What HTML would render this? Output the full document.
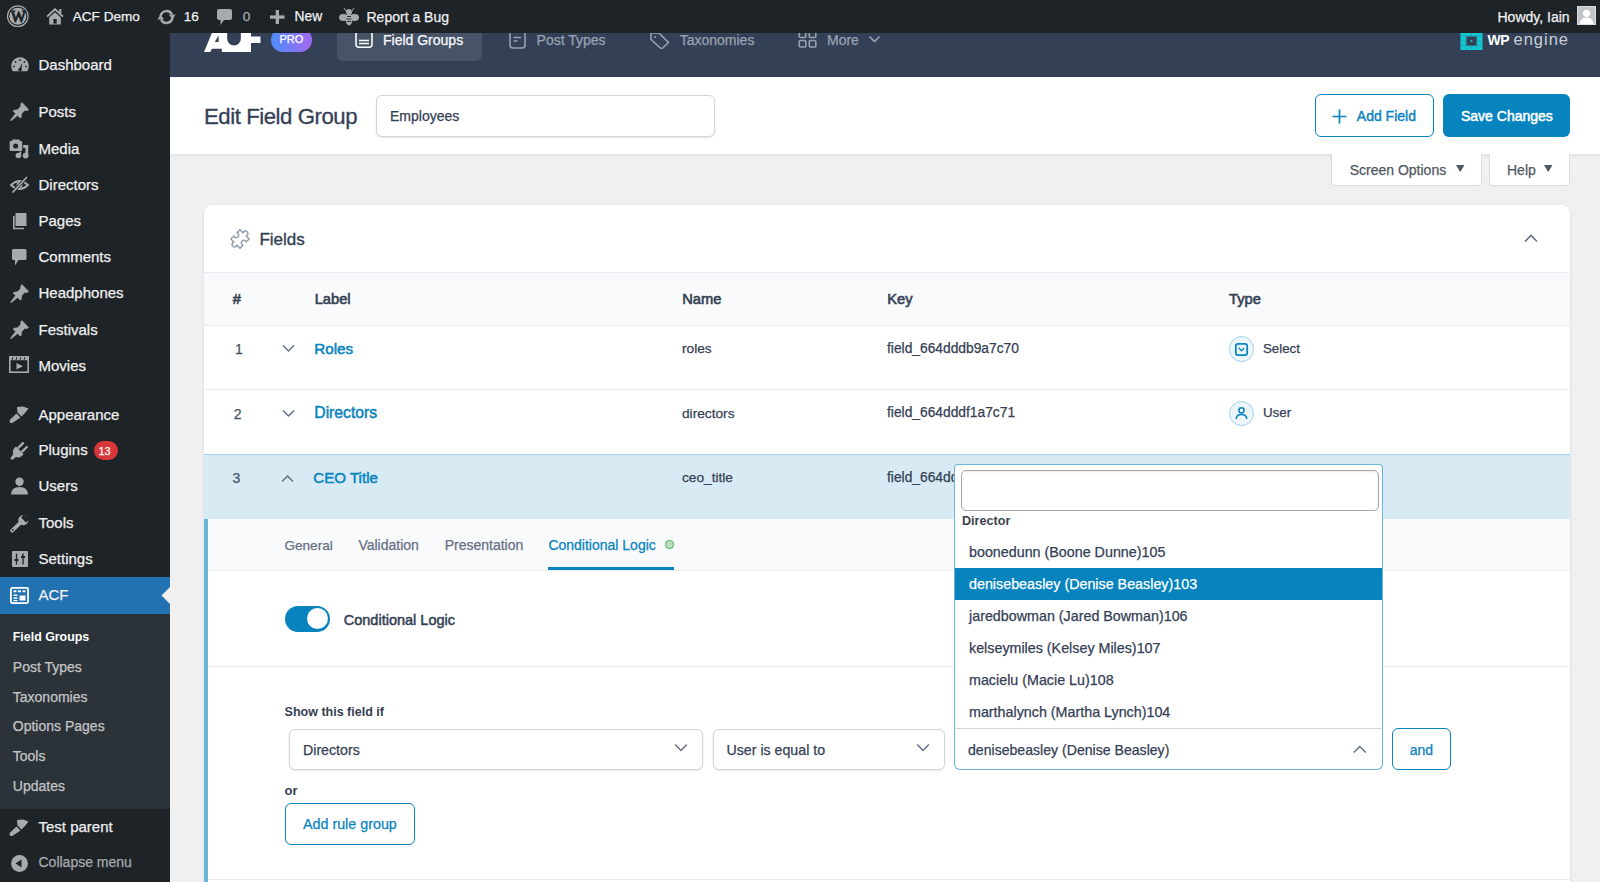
<!DOCTYPE html>
<html><head><meta charset="utf-8"><title>Edit Field Group</title>
<style>
html,body{margin:0;padding:0}
body{width:1600px;height:882px;overflow:hidden;position:relative;background:#f0f0f1;font-family:"Liberation Sans",sans-serif}
.t{position:absolute;line-height:1;white-space:nowrap;-webkit-text-stroke:0.25px currentColor}
.r{position:absolute;display:block}
</style></head><body>
<div class="r" style="left:170px;top:33px;width:1430px;height:44px;background:#344055;"></div>
<svg class="r" style="left:204px;top:32px;" width="57" height="20" viewBox="0 0 57 20"><path d="M0 20 L8.3 0 L47 0 L47 20 Z" fill="#fff"/><rect x="46" y="4.5" width="10.5" height="6.5" fill="#fff"/><path d="M10.8 10 L14.6 3.5 L14.6 10 Z" fill="#344055"/><path d="M6.4 20 L7.8 16.7 L17.8 16.7 L17.8 20 Z" fill="#344055"/><circle cx="30" cy="6.7" r="6.8" fill="#344055"/><rect x="23.2" y="0" width="13.6" height="6" fill="#344055"/></svg>
<div class="r" style="left:270.5px;top:27.5px;width:41.5px;height:24.5px;border-radius:12.5px;background:linear-gradient(90deg,#4d8cfb,#a36af3)"></div>
<div class="t " style="left:279.5px;top:34.09px;font-size:11px;color:#fff;font-weight:400;">PRO</div>
<div class="r" style="left:337px;top:20px;width:145px;height:40.6px;border-radius:6px;background:#475467"></div>
<svg class="r" style="left:355px;top:30px;" width="18" height="19" viewBox="0 0 18 19"><rect x="1" y="1" width="16" height="16.2" rx="3" fill="none" stroke="#f9fafb" stroke-width="1.6"/><path d="M4 10.4 H14 M4 13.6 H14" stroke="#f9fafb" stroke-width="1.5"/></svg>
<div class="t " style="left:383px;top:33.05px;font-size:14px;color:#f9fafb;font-weight:400;">Field Groups</div>
<svg class="r" style="left:509px;top:30px;clip-path:inset(2px 0 0 0)" width="17" height="19" viewBox="0 0 17 19"><rect x="1" y="1" width="15" height="17" rx="3" fill="none" stroke="#98a2b3" stroke-width="1.6"/><path d="M4.5 7.5 H12 M4.5 11 H8.5" stroke="#98a2b3" stroke-width="1.6"/></svg>
<div class="t " style="left:536.6px;top:33.05px;font-size:14px;color:#98a2b3;font-weight:400;">Post Types</div>
<svg class="r" style="left:649px;top:30px;clip-path:inset(2px 0 0 0)" width="21" height="19" viewBox="0 0 21 19"><path d="M2 3 L10 3 L19.5 12.5 L12.5 19 L2 9.5 Z" fill="none" stroke="#98a2b3" stroke-width="1.6" stroke-linejoin="round"/><circle cx="6" cy="7" r="1" fill="#98a2b3"/></svg>
<div class="t " style="left:679.7px;top:33.05px;font-size:14px;color:#98a2b3;font-weight:400;">Taxonomies</div>
<svg class="r" style="left:798px;top:30px;clip-path:inset(1px 0 0 0)" width="20" height="18" viewBox="0 0 20 18"><rect x="1.3" y="1" width="6.5" height="6.5" rx="1" fill="none" stroke="#98a2b3" stroke-width="1.6"/><rect x="11.3" y="1" width="6.5" height="6.5" rx="1" fill="none" stroke="#98a2b3" stroke-width="1.6"/><rect x="1.3" y="10.5" width="6.5" height="6.5" rx="1" fill="none" stroke="#98a2b3" stroke-width="1.6"/><rect x="11.3" y="10.5" width="6.5" height="6.5" rx="1" fill="none" stroke="#98a2b3" stroke-width="1.6"/></svg>
<div class="t " style="left:827px;top:33.05px;font-size:14px;color:#98a2b3;font-weight:400;">More</div>
<svg class="r" style="left:868px;top:35px;" width="13" height="9" viewBox="0 0 13 9"><path d="M1.5 1.5 L6.5 6.5 L11.5 1.5" fill="none" stroke="#98a2b3" stroke-width="1.6"/></svg>
<svg class="r" style="left:1460px;top:32px;" width="23" height="18" viewBox="0 0 23 18"><rect x="0.5" y="0" width="22" height="18" fill="#0ecad4"/><path d="M6 0 V18 M11.5 0 V18 M17 0 V18 M0 4 H23 M0 9 H23 M0 13.5 H23" stroke="#2f9aa5" stroke-width="0.7"/><rect x="6.5" y="4.5" width="10" height="9" fill="#344055"/><circle cx="11.5" cy="9" r="1" fill="#0ecad4"/></svg>
<div class="t " style="left:1487.5px;top:32.65px;font-size:14px;color:#fff;font-weight:700;-webkit-text-stroke:0;letter-spacing:-0.5px">WP</div>
<div class="t " style="left:1513.5px;top:30.53px;font-size:16.5px;color:#c9ced6;font-weight:400;-webkit-text-stroke:0px currentColor;letter-spacing:1px">engine</div>
<div class="r" style="left:170px;top:77px;width:1430px;height:78px;background:#fff;border-bottom:1px solid #e4e7ec;box-sizing:border-box;box-shadow:0 1px 2px rgba(16,24,40,.08)"></div>
<div class="t " style="left:204px;top:105.71px;font-size:22.2px;color:#344054;font-weight:400;-webkit-text-stroke:0.3px currentColor;letter-spacing:-0.45px">Edit Field Group</div>
<div class="r" style="left:376px;top:94.5px;width:339px;height:42px;background:#fff;border:1px solid #d0d5dd;border-radius:6px;box-sizing:border-box;box-shadow:0 1px 2px rgba(16,24,40,.1)"></div>
<div class="t " style="left:390px;top:109.15px;font-size:14px;color:#344054;font-weight:400;">Employees</div>
<div class="r" style="left:1315px;top:94px;width:119px;height:43px;background:#fff;border:1px solid #0783be;border-radius:6px;box-sizing:border-box"></div>
<svg class="r" style="left:1331px;top:108px;" width="17" height="17" viewBox="0 0 17 17"><path d="M8.5 1.5 V15.5 M1.5 8.5 H15.5" stroke="#0783be" stroke-width="1.7"/></svg>
<div class="t " style="left:1356.8px;top:109.15px;font-size:14px;color:#0783be;font-weight:400;-webkit-text-stroke:0.4px currentColor;">Add Field</div>
<div class="r" style="left:1443px;top:94px;width:127px;height:43px;background:#0783be;border-radius:6px"></div>
<div class="t " style="left:1461px;top:109.15px;font-size:14px;color:#fff;font-weight:400;-webkit-text-stroke:0.5px currentColor;">Save Changes</div>
<div class="r" style="left:1331px;top:154px;width:151px;height:32px;background:#fff;border:1px solid #dcdcde;border-top:none;border-radius:0 0 4px 4px;box-sizing:border-box"></div>
<div class="r" style="left:1489px;top:154px;width:81px;height:32px;background:#fff;border:1px solid #dcdcde;border-top:none;border-radius:0 0 4px 4px;box-sizing:border-box"></div>
<div class="t " style="left:1349.7px;top:162.75px;font-size:14px;color:#50575e;font-weight:400;">Screen Options</div>
<svg class="r" style="left:1456px;top:165px;" width="9" height="8" viewBox="0 0 9 8"><path d="M0 0 H8.5 L4.25 7 Z" fill="#50575e"/></svg>
<div class="t " style="left:1507px;top:162.75px;font-size:14px;color:#50575e;font-weight:400;">Help</div>
<svg class="r" style="left:1543.5px;top:165px;" width="9" height="8" viewBox="0 0 9 8"><path d="M0 0 H8.5 L4.25 7 Z" fill="#50575e"/></svg>
<div class="r" style="left:0px;top:0px;width:1600px;height:33px;background:#1d2327;"></div>
<div class="t " style="left:72.7px;top:10.09px;font-size:13.6px;color:#f0f0f1;font-weight:400;">ACF Demo</div>
<div class="t " style="left:183.7px;top:10.09px;font-size:13.6px;color:#f0f0f1;font-weight:400;">16</div>
<div class="t " style="left:242.7px;top:10.09px;font-size:13.6px;color:#a7aaad;font-weight:400;">0</div>
<div class="t " style="left:294.5px;top:9.92px;font-size:13.8px;color:#f0f0f1;font-weight:400;">New</div>
<div class="t " style="left:366.5px;top:9.75px;font-size:14px;color:#f0f0f1;font-weight:400;">Report a Bug</div>
<div class="t " style="left:1497.5px;top:9.75px;font-size:14px;color:#f0f0f1;font-weight:400;">Howdy, Iain</div>
<svg class="r" style="left:6px;top:5px;" width="23" height="23" viewBox="0 0 23 23"><circle cx="11.8" cy="11.2" r="10.3" fill="none" stroke="#a7aaad" stroke-width="1.2"/><circle cx="11.8" cy="11.2" r="8.5" fill="#a7aaad"/><text x="11.8" y="16.9" text-anchor="middle" font-family="Liberation Serif" font-size="16" fill="#1d2327" letter-spacing="-1.2" stroke="#1d2327" stroke-width="1">W</text></svg>
<svg class="r" style="left:46px;top:8px;" width="18" height="17" viewBox="0 0 18 17"><path d="M1 8.6 L9 1.2 L17 8.6" fill="none" stroke="#a7aaad" stroke-width="1.9"/><path d="M3.2 9.6 L9 4.3 L14.8 9.6 V16.5 H3.2 Z" fill="#a7aaad"/><rect x="7.4" y="11" width="3.3" height="4.6" fill="#1d2327"/><rect x="13.2" y="1" width="2.2" height="4.5" fill="#a7aaad"/></svg>
<svg class="r" style="left:157px;top:8px;" width="19" height="18" viewBox="0 0 19 18"><path d="M3.6 8.2 A6 6 0 0 1 15 6.6" fill="none" stroke="#a7aaad" stroke-width="2.5"/><path d="M15.4 9.8 A6 6 0 0 1 4 11.4" fill="none" stroke="#a7aaad" stroke-width="2.5"/><path d="M11.8 6.8 L18.6 6.4 L15.6 11.2 Z" fill="#a7aaad"/><path d="M7.2 11.2 L0.4 11.6 L3.4 6.8 Z" fill="#a7aaad"/></svg>
<svg class="r" style="left:217px;top:9px;" width="15" height="17" viewBox="0 0 15 17"><path d="M2 0 H13 Q15 0 15 2 V9 Q15 11 13 11 H7 L3.5 16 L3.5 11 H2 Q0 11 0 9 V2 Q0 0 2 0 Z" fill="#a7aaad"/></svg>
<svg class="r" style="left:270px;top:10px;" width="15" height="14" viewBox="0 0 15 14"><rect x="5.7" y="0" width="3.3" height="14" fill="#a7aaad"/><rect x="0" y="5.4" width="14.5" height="3.3" fill="#a7aaad"/></svg>
<svg class="r" style="left:339px;top:8px;" width="20" height="18" viewBox="0 0 20 18"><ellipse cx="4.5" cy="9.5" rx="4.5" ry="3.4" fill="#a7aaad"/><ellipse cx="15.5" cy="9.5" rx="4.5" ry="3.4" fill="#a7aaad"/><ellipse cx="10" cy="11.5" rx="3.3" ry="6" fill="#a7aaad"/><circle cx="10" cy="4" r="3" fill="#a7aaad"/><path d="M8 8.5h4M7.5 11h5M7.8 13.5h4.4" stroke="#1d2327" stroke-width="0.9"/><path d="M7 3 L5 0 M13 3 L15 0" stroke="#a7aaad" stroke-width="1"/></svg>
<div class="r" style="left:1577px;top:6px;width:19px;height:19px;background:#c3c4c7;border:1px solid #dcdcde;box-sizing:border-box;overflow:hidden"><svg width="17" height="17" viewBox="0 0 17 17" style="position:absolute;left:0;top:0"><circle cx="8.5" cy="6.3" r="3.6" fill="#fff"/><path d="M1.5 17 Q2 10.5 8.5 10.5 Q15 10.5 15.5 17 Z" fill="#fff"/></svg></div>
<div class="r" style="left:0px;top:32px;width:170px;height:850px;background:#1d2327;"></div>
<div class="r" style="left:0px;top:614px;width:170px;height:195px;background:#2c3338;"></div>
<div class="r" style="left:0px;top:577px;width:170px;height:37px;background:#2271b1;"></div>
<svg class="r" style="left:161px;top:587px;" width="9" height="17" viewBox="0 0 9 17"><path d="M9 0 L0.5 8.5 L9 17 Z" fill="#f0f0f1"/></svg>
<div class="t " style="left:38.5px;top:56.70px;font-size:15px;color:#f0f0f1;font-weight:400;">Dashboard</div>
<div class="t " style="left:38.5px;top:103.50px;font-size:15px;color:#f0f0f1;font-weight:400;">Posts</div>
<div class="t " style="left:38.5px;top:140.65px;font-size:15px;color:#f0f0f1;font-weight:400;">Media</div>
<div class="t " style="left:38.5px;top:177.10px;font-size:15px;color:#f0f0f1;font-weight:400;">Directors</div>
<div class="t " style="left:38.5px;top:213.35px;font-size:15px;color:#f0f0f1;font-weight:400;">Pages</div>
<div class="t " style="left:38.5px;top:249.20px;font-size:15px;color:#f0f0f1;font-weight:400;">Comments</div>
<div class="t " style="left:38.5px;top:285.15px;font-size:15px;color:#f0f0f1;font-weight:400;">Headphones</div>
<div class="t " style="left:38.5px;top:321.60px;font-size:15px;color:#f0f0f1;font-weight:400;">Festivals</div>
<div class="t " style="left:38.5px;top:358.10px;font-size:15px;color:#f0f0f1;font-weight:400;">Movies</div>
<div class="t " style="left:38.5px;top:406.80px;font-size:15px;color:#f0f0f1;font-weight:400;">Appearance</div>
<div class="t " style="left:38.5px;top:442.25px;font-size:15px;color:#f0f0f1;font-weight:400;">Plugins</div>
<div class="t " style="left:38.5px;top:477.80px;font-size:15px;color:#f0f0f1;font-weight:400;">Users</div>
<div class="t " style="left:38.5px;top:515.15px;font-size:15px;color:#f0f0f1;font-weight:400;">Tools</div>
<div class="t " style="left:38.5px;top:551.40px;font-size:15px;color:#f0f0f1;font-weight:400;">Settings</div>
<div class="t " style="left:38.5px;top:586.95px;font-size:15px;color:#f0f0f1;font-weight:400;">ACF</div>
<div class="t " style="left:38.5px;top:819.20px;font-size:15px;color:#f0f0f1;font-weight:400;">Test parent</div>
<div class="t " style="left:38.5px;top:855.35px;font-size:14px;color:#a7aaad;font-weight:400;">Collapse menu</div>
<div class="r" style="left:94px;top:441px;width:24px;height:19px;background:#d63638;border-radius:10px"></div>
<div class="t " style="left:98.5px;top:445.99px;font-size:11px;color:#fff;font-weight:400;">13</div>
<div class="t " style="left:12.8px;top:631.10px;font-size:12.4px;color:#fff;font-weight:700;-webkit-text-stroke:0;">Field Groups</div>
<div class="t " style="left:12.8px;top:659.65px;font-size:14px;color:#c3c4c7;font-weight:400;">Post Types</div>
<div class="t " style="left:12.8px;top:689.55px;font-size:14px;color:#c3c4c7;font-weight:400;">Taxonomies</div>
<div class="t " style="left:12.8px;top:719.45px;font-size:14px;color:#c3c4c7;font-weight:400;">Options Pages</div>
<div class="t " style="left:12.8px;top:749.35px;font-size:14px;color:#c3c4c7;font-weight:400;">Tools</div>
<div class="t " style="left:12.8px;top:779.25px;font-size:14px;color:#c3c4c7;font-weight:400;">Updates</div>
<svg class="r" style="left:10.5px;top:56.8px;" width="18" height="15" viewBox="0 0 18 15"><path d="M1.9 14.2 A8.8 8.8 0 1 1 16.1 14.2 Z" fill="#a7aaad"/><circle cx="3" cy="9.5" r="0.9" fill="#1d2327"/><circle cx="4.6" cy="5" r="0.9" fill="#1d2327"/><circle cx="9" cy="3" r="0.9" fill="#1d2327"/><circle cx="13.4" cy="5" r="0.9" fill="#1d2327"/><circle cx="15" cy="9.5" r="0.9" fill="#1d2327"/><path d="M7.6 13.6 L11.2 5.8 L10.4 13.6 Z" fill="#1d2327"/><circle cx="9" cy="12.6" r="1.7" fill="#1d2327"/></svg>
<svg class="r" style="left:9.5px;top:102px;" width="19" height="19" viewBox="0 0 19 19"><path d="M12 0.6 L18.6 7.4 L17.6 8.4 L14.6 8.6 L11.6 11.8 L11.2 15.4 L10.2 16 L7.6 13.4 L1.2 18.8 L0.5 18.2 L5.6 11.4 L3.2 9.2 L3.8 8.3 L7.5 7.8 L10.5 4.8 L11 1.4 Z" fill="#a7aaad" stroke="#a7aaad" stroke-width="0.6" stroke-linejoin="round"/></svg>
<svg class="r" style="left:9px;top:138.5px;" width="20" height="20" viewBox="0 0 20 20"><rect x="0.6" y="2" width="12.6" height="10" rx="1.2" fill="#a7aaad"/><rect x="3" y="0.5" width="8" height="2.5" rx="1" fill="#a7aaad"/><circle cx="6.6" cy="7.1" r="2.5" fill="#1d2327"/><rect x="16.4" y="6" width="2.8" height="10.5" fill="#a7aaad"/><rect x="14.2" y="6" width="5" height="3" fill="#a7aaad"/><circle cx="16.6" cy="16.6" r="2.9" fill="#a7aaad"/><circle cx="9.4" cy="16.5" r="2.8" fill="#a7aaad"/><rect x="10.4" y="12.5" width="1.8" height="4" fill="#a7aaad"/></svg>
<svg class="r" style="left:9.5px;top:176px;" width="19" height="17" viewBox="0 0 19 17"><path d="M1 9 Q9.5 1 18 9 Q9.5 17 1 9 Z" fill="none" stroke="#a7aaad" stroke-width="1.8"/><circle cx="9.5" cy="9" r="3" fill="#a7aaad"/><path d="M2.5 16.5 L17 1" stroke="#1d2327" stroke-width="3.2"/><path d="M2.5 16.5 L17 1" stroke="#a7aaad" stroke-width="1.8"/></svg>
<svg class="r" style="left:11.5px;top:212.5px;" width="15" height="17" viewBox="0 0 15 17"><rect x="3.5" y="0" width="11" height="13" fill="#a7aaad"/><path d="M1.8 3 V15.5 H12" fill="none" stroke="#a7aaad" stroke-width="1.6"/></svg>
<svg class="r" style="left:11.5px;top:248.5px;" width="15" height="17" viewBox="0 0 15 17"><path d="M1.5 0 H13 Q14.5 0 14.5 1.5 V9.5 Q14.5 11 13 11 H6.5 L3 16.5 L3 11 H1.5 Q0 11 0 9.5 V1.5 Q0 0 1.5 0 Z" fill="#a7aaad"/></svg>
<svg class="r" style="left:9.5px;top:283.5px;" width="19" height="19" viewBox="0 0 19 19"><path d="M12 0.6 L18.6 7.4 L17.6 8.4 L14.6 8.6 L11.6 11.8 L11.2 15.4 L10.2 16 L7.6 13.4 L1.2 18.8 L0.5 18.2 L5.6 11.4 L3.2 9.2 L3.8 8.3 L7.5 7.8 L10.5 4.8 L11 1.4 Z" fill="#a7aaad" stroke="#a7aaad" stroke-width="0.6" stroke-linejoin="round"/></svg>
<svg class="r" style="left:9.5px;top:320px;" width="19" height="19" viewBox="0 0 19 19"><path d="M12 0.6 L18.6 7.4 L17.6 8.4 L14.6 8.6 L11.6 11.8 L11.2 15.4 L10.2 16 L7.6 13.4 L1.2 18.8 L0.5 18.2 L5.6 11.4 L3.2 9.2 L3.8 8.3 L7.5 7.8 L10.5 4.8 L11 1.4 Z" fill="#a7aaad" stroke="#a7aaad" stroke-width="0.6" stroke-linejoin="round"/></svg>
<svg class="r" style="left:9px;top:355.5px;" width="20" height="17" viewBox="0 0 20 17"><rect x="0.8" y="0.8" width="18.4" height="15.4" fill="none" stroke="#a7aaad" stroke-width="1.6"/><rect x="0.8" y="0.8" width="18.4" height="3.4" fill="#a7aaad"/><path d="M4 1 L3 4 M8 1 L7 4 M12 1 L11 4 M16 1 L15 4" stroke="#1d2327" stroke-width="0.9"/><path d="M7.5 7 L14 10.3 L7.5 13.6 Z" fill="#a7aaad"/></svg>
<svg class="r" style="left:9px;top:406px;" width="20" height="17" viewBox="0 0 20 17"><path d="M8 1 L14 0.5 L19.5 2.5 L16 7 L12.5 10.5 L8.5 6.5 Z" fill="#a7aaad"/><path d="M7.5 7.5 L11.5 11.5 L4 16.5 Q2 17.5 1 16.5 Q0 15.5 1.2 13.5 Z" fill="#a7aaad"/></svg>
<svg class="r" style="left:10px;top:441.5px;" width="18" height="18" viewBox="0 0 18 18"><path d="M6 4.5 L13.5 12 Q10.5 16.5 6 15 L2.2 18 L0.3 16.2 L3.2 12.2 Q1.5 8 6 4.5 Z" fill="#a7aaad"/><path d="M8.6 5.6 L13 1.2 M12.4 9.4 L16.8 5" stroke="#a7aaad" stroke-width="2.4" stroke-linecap="round"/></svg>
<svg class="r" style="left:10.5px;top:477px;" width="17" height="18" viewBox="0 0 17 18"><circle cx="8.5" cy="4.7" r="4.2" fill="#a7aaad"/><path d="M0 17.5 Q0 10 8.5 10 Q17 10 17 17.5 Z" fill="#a7aaad"/></svg>
<svg class="r" style="left:10px;top:514.5px;" width="19" height="18" viewBox="0 0 19 18"><path d="M2.2 15.6 L10 8.2" stroke="#a7aaad" stroke-width="3.8" stroke-linecap="round"/><circle cx="13.3" cy="5.3" r="5" fill="#a7aaad"/><path d="M14 -1 L19.5 4.5 L16 7.5 L11.2 2.7 Z" fill="#1d2327"/><circle cx="2.8" cy="15" r="0.9" fill="#1d2327"/></svg>
<svg class="r" style="left:12px;top:551px;" width="16" height="16" viewBox="0 0 16 16"><rect x="0" y="0" width="16" height="16" rx="1" fill="#a7aaad"/><path d="M4.5 2.5 V13.5 M11 2.5 V13.5" stroke="#1d2327" stroke-width="1.3"/><rect x="2.5" y="8" width="4" height="2" fill="#1d2327"/><rect x="9" y="5" width="4" height="2" fill="#1d2327"/></svg>
<svg class="r" style="left:10px;top:586.5px;" width="19" height="17" viewBox="0 0 19 17"><rect x="0.9" y="0.9" width="17.2" height="15.2" rx="1.5" fill="none" stroke="#fff" stroke-width="1.8"/><rect x="3.5" y="3.3" width="3" height="2" fill="#fff"/><rect x="8" y="3.3" width="3" height="2" fill="#fff"/><rect x="12.5" y="3.3" width="3" height="2" fill="#fff"/><rect x="3.5" y="7.5" width="4" height="1.5" fill="#fff"/><rect x="3.5" y="10.3" width="4" height="1.5" fill="#fff"/><rect x="3.5" y="13" width="4" height="1.3" fill="#fff"/><rect x="9.5" y="8.5" width="6" height="5" fill="#fff"/></svg>
<svg class="r" style="left:9px;top:818.5px;" width="20" height="17" viewBox="0 0 20 17"><path d="M8 1 L14 0.5 L19.5 2.5 L16 7 L12.5 10.5 L8.5 6.5 Z" fill="#a7aaad"/><path d="M7.5 7.5 L11.5 11.5 L4 16.5 Q2 17.5 1 16.5 Q0 15.5 1.2 13.5 Z" fill="#a7aaad"/></svg>
<svg class="r" style="left:10.5px;top:855px;" width="17" height="17" viewBox="0 0 17 17"><circle cx="8.5" cy="8.5" r="8.4" fill="#a7aaad"/><path d="M4.5 8.5 L10.5 4.5 V12.5 Z" fill="#1d2327"/></svg>
<div class="r" style="left:204px;top:205px;width:1366px;height:720px;background:#fff;border-radius:8px;box-shadow:0 1px 3px rgba(16,24,40,.1),0 1px 2px rgba(16,24,40,.06)"></div>
<svg class="r" style="left:227.5px;top:226.5px;" width="24" height="24" viewBox="0 0 24 24"><path d="M5.5 5.5 H9.8 A2.5 2.5 0 1 1 14.2 5.5 H18.5 V9.8 A2.5 2.5 0 1 0 18.5 14.2 V18.5 H14.2 A2.5 2.5 0 1 1 9.8 18.5 H5.5 V14.2 A2.5 2.5 0 1 0 5.5 9.8 Z" fill="none" stroke="#98a2b3" stroke-width="1.6" stroke-linejoin="round" transform="rotate(45 12 12)"/></svg>
<div class="t " style="left:259.4px;top:230.91px;font-size:17px;color:#344054;font-weight:400;-webkit-text-stroke:0.35px currentColor;">Fields</div>
<svg class="r" style="left:1523px;top:232px;" width="16" height="12" viewBox="0 0 16 12"><path d="M2 9.5 L8 3.5 L14 9.5" fill="none" stroke="#667085" stroke-width="1.7"/></svg>
<div class="r" style="left:204px;top:272px;width:1366px;height:54px;background:#f9fafb;border-top:1px solid #eaecf0;border-bottom:1px solid #eaecf0;box-sizing:border-box"></div>
<div class="t " style="left:232.7px;top:291.86px;font-size:14.7px;color:#344054;font-weight:400;-webkit-text-stroke:0.6px currentColor;">#</div>
<div class="t " style="left:314.7px;top:291.86px;font-size:14.7px;color:#344054;font-weight:400;-webkit-text-stroke:0.6px currentColor;">Label</div>
<div class="t " style="left:682.2px;top:291.86px;font-size:14.7px;color:#344054;font-weight:400;-webkit-text-stroke:0.6px currentColor;">Name</div>
<div class="t " style="left:887.2px;top:291.86px;font-size:14.7px;color:#344054;font-weight:400;-webkit-text-stroke:0.6px currentColor;">Key</div>
<div class="t " style="left:1229px;top:291.86px;font-size:14.7px;color:#344054;font-weight:400;-webkit-text-stroke:0.6px currentColor;">Type</div>
<div class="r" style="left:204px;top:389px;width:1366px;height:1px;background:#eaecf0;"></div>
<div class="r" style="left:204px;top:454px;width:1366px;height:65px;background:#d8ebf5;border-top:1px solid #a5d2e7;box-sizing:border-box"></div>
<div class="t " style="left:235px;top:342.15px;font-size:14px;color:#475467;font-weight:400;">1</div>
<div class="t " style="left:314.3px;top:341.13px;font-size:15.2px;color:#0783be;font-weight:400;-webkit-text-stroke:0.5px currentColor;">Roles</div>
<div class="t " style="left:682px;top:342.00px;font-size:13.7px;color:#344054;font-weight:400;">roles</div>
<div class="t " style="left:887px;top:341.92px;font-size:13.8px;color:#344054;font-weight:400;">field_664dddb9a7c70</div>
<div class="t " style="left:1263px;top:341.94px;font-size:13.3px;color:#344054;font-weight:400;">Select</div>
<div class="t " style="left:233.7px;top:406.65px;font-size:14px;color:#475467;font-weight:400;">2</div>
<div class="t " style="left:314.3px;top:405.21px;font-size:15.7px;color:#0783be;font-weight:400;-webkit-text-stroke:0.5px currentColor;">Directors</div>
<div class="t " style="left:682px;top:406.50px;font-size:13.7px;color:#344054;font-weight:400;">directors</div>
<div class="t " style="left:887px;top:406.42px;font-size:13.8px;color:#344054;font-weight:400;">field_664dddf1a7c71</div>
<div class="t " style="left:1263px;top:406.44px;font-size:13.3px;color:#344054;font-weight:400;">User</div>
<svg class="r" style="left:281.5px;top:344px;" width="13" height="9" viewBox="0 0 13 9"><path d="M1 1.5 L6.5 7 L12 1.5" fill="none" stroke="#667085" stroke-width="1.5"/></svg>
<svg class="r" style="left:281.5px;top:408.5px;" width="13" height="9" viewBox="0 0 13 9"><path d="M1 1.5 L6.5 7 L12 1.5" fill="none" stroke="#667085" stroke-width="1.5"/></svg>
<div class="t " style="left:232.5px;top:471.15px;font-size:14px;color:#475467;font-weight:400;">3</div>
<svg class="r" style="left:280.5px;top:474px;" width="13" height="9" viewBox="0 0 13 9"><path d="M1 7.5 L6.5 2 L12 7.5" fill="none" stroke="#667085" stroke-width="1.5"/></svg>
<div class="t " style="left:313.3px;top:470.22px;font-size:15.1px;color:#0783be;font-weight:400;-webkit-text-stroke:0.5px currentColor;">CEO Title</div>
<div class="t " style="left:682px;top:471.00px;font-size:13.7px;color:#344054;font-weight:400;">ceo_title</div>
<div class="t " style="left:887px;top:470.92px;font-size:13.8px;color:#344054;font-weight:400;">field_664dddfca7c72</div>
<div class="r" style="left:1228.5px;top:336px;width:25.5px;height:25.5px;border-radius:50%;background:#ebf5fa;border:1px solid #a5d2e7;box-sizing:border-box"></div>
<svg class="r" style="left:1229px;top:336.5px;" width="25" height="25" viewBox="0 0 25 25"><rect x="6.8" y="6.8" width="11.4" height="11.4" rx="2.2" fill="none" stroke="#0783be" stroke-width="1.7"/><path d="M9.8 11 L12.5 13.7 L15.2 11" fill="none" stroke="#0783be" stroke-width="1.4"/></svg>
<div class="r" style="left:1228.5px;top:400.7px;width:25.5px;height:25.5px;border-radius:50%;background:#ebf5fa;border:1px solid #a5d2e7;box-sizing:border-box"></div>
<svg class="r" style="left:1229px;top:401.2px;" width="25" height="25" viewBox="0 0 25 25"><circle cx="12.5" cy="9.3" r="2.6" fill="none" stroke="#0783be" stroke-width="1.5"/><path d="M7.2 18 Q7.5 13.6 12.5 13.6 Q17.5 13.6 17.8 18" fill="none" stroke="#0783be" stroke-width="1.5"/></svg>
<div class="r" style="left:204px;top:519px;width:4px;height:400px;background:#6bb5d8;"></div>
<div class="r" style="left:208px;top:519px;width:1362px;height:52px;background:#f9fafb;border-bottom:1px solid #eaecf0;box-sizing:border-box"></div>
<div class="t " style="left:284.4px;top:538.79px;font-size:13.6px;color:#667085;font-weight:400;">General</div>
<div class="t " style="left:358.4px;top:538.45px;font-size:14px;color:#667085;font-weight:400;">Validation</div>
<div class="t " style="left:444.7px;top:538.45px;font-size:14px;color:#667085;font-weight:400;">Presentation</div>
<div class="t " style="left:548.4px;top:538.45px;font-size:14px;color:#0783be;font-weight:400;">Conditional Logic</div>
<div class="r" style="left:665px;top:540px;width:8.5px;height:8.5px;border-radius:50%;background:#b9dfbc;border:1.5px solid #52aa59;box-sizing:border-box"></div>
<div class="r" style="left:548px;top:567px;width:125.5px;height:3px;background:#0783be;"></div>
<div class="r" style="left:285px;top:605.5px;width:45px;height:26px;background:#0783be;border-radius:13px"></div>
<div class="r" style="left:306.5px;top:607.8px;width:21.5px;height:21.5px;border-radius:50%;background:#fff"></div>
<div class="t " style="left:343.75px;top:612.73px;font-size:14.5px;color:#344054;font-weight:400;-webkit-text-stroke:0.5px currentColor;">Conditional Logic</div>
<div class="r" style="left:208px;top:666px;width:1362px;height:1px;background:#eaecf0;"></div>
<div class="t " style="left:284.6px;top:706.12px;font-size:12.5px;color:#344054;font-weight:700;-webkit-text-stroke:0;">Show this field if</div>
<div class="r" style="left:289px;top:728.5px;width:414px;height:41px;background:#fff;border:1px solid #d0d5dd;border-radius:6px;box-sizing:border-box;box-shadow:0 1px 2px rgba(16,24,40,.1)"></div>
<div class="t " style="left:303px;top:742.68px;font-size:14.2px;color:#344054;font-weight:400;">Directors</div>
<svg class="r" style="left:673.5px;top:743px;" width="14" height="10" viewBox="0 0 14 10"><path d="M1.2 1.5 L7 7.5 L12.8 1.5" fill="none" stroke="#667085" stroke-width="1.5"/></svg>
<div class="r" style="left:712.5px;top:728.5px;width:232.5px;height:41px;background:#fff;border:1px solid #d0d5dd;border-radius:6px;box-sizing:border-box;box-shadow:0 1px 2px rgba(16,24,40,.1)"></div>
<div class="t " style="left:726.5px;top:742.68px;font-size:14.2px;color:#344054;font-weight:400;">User is equal to</div>
<svg class="r" style="left:915.5px;top:743px;" width="14" height="10" viewBox="0 0 14 10"><path d="M1.2 1.5 L7 7.5 L12.8 1.5" fill="none" stroke="#667085" stroke-width="1.5"/></svg>
<div class="t " style="left:284.6px;top:783.60px;font-size:13px;color:#344054;font-weight:700;-webkit-text-stroke:0;">or</div>
<div class="r" style="left:284.6px;top:803px;width:130.5px;height:42px;background:#fff;border:1px solid #0783be;border-radius:6px;box-sizing:border-box"></div>
<div class="t " style="left:303px;top:816.90px;font-size:14.3px;color:#0783be;font-weight:400;">Add rule group</div>
<div class="r" style="left:1391.5px;top:728px;width:59.5px;height:41.5px;background:#fff;border:1px solid #0783be;border-radius:6px;box-sizing:border-box"></div>
<div class="t " style="left:1409.7px;top:742.75px;font-size:14px;color:#0783be;font-weight:400;">and</div>
<div class="r" style="left:208px;top:879px;width:1362px;height:1px;background:#eaecf0;"></div>
<div class="r" style="left:954px;top:728px;width:429px;height:42px;background:#fff;border:1px solid #6bb5d8;border-top:1px solid #d0d5dd;border-radius:0 0 6px 6px;box-sizing:border-box"></div>
<div class="t " style="left:968px;top:742.66px;font-size:14.1px;color:#344054;font-weight:400;">denisebeasley (Denise Beasley)</div>
<svg class="r" style="left:1352px;top:743px;" width="16" height="12" viewBox="0 0 16 12"><path d="M1.8 9.5 L7.8 3.5 L13.8 9.5" fill="none" stroke="#667085" stroke-width="1.5"/></svg>
<div class="r" style="left:954px;top:464px;width:429px;height:264px;background:#fff;border:1px solid #6bb5d8;border-bottom:none;border-radius:4px 4px 0 0;box-sizing:border-box"></div>
<div class="r" style="left:960.5px;top:469.5px;width:418.5px;height:41.5px;background:#fff;border:1px solid #a7a7a7;border-radius:5px;box-sizing:border-box;box-shadow:inset 0 1px 2px rgba(0,0,0,.08)"></div>
<div class="t " style="left:962px;top:514.53px;font-size:12.6px;color:#3c434a;font-weight:700;-webkit-text-stroke:0;">Director</div>
<div class="t " style="left:969px;top:544.50px;font-size:14.3px;color:#344054;font-weight:400;">boonedunn (Boone Dunne)105</div>
<div class="r" style="left:955px;top:568px;width:427px;height:32px;background:#0783be;"></div>
<div class="t " style="left:969px;top:576.50px;font-size:14.3px;color:#fff;font-weight:400;">denisebeasley (Denise Beasley)103</div>
<div class="t " style="left:969px;top:608.50px;font-size:14.3px;color:#344054;font-weight:400;">jaredbowman (Jared Bowman)106</div>
<div class="t " style="left:969px;top:640.50px;font-size:14.3px;color:#344054;font-weight:400;">kelseymiles (Kelsey Miles)107</div>
<div class="t " style="left:969px;top:672.50px;font-size:14.3px;color:#344054;font-weight:400;">macielu (Macie Lu)108</div>
<div class="t " style="left:969px;top:704.50px;font-size:14.3px;color:#344054;font-weight:400;">marthalynch (Martha Lynch)104</div>
</body></html>
